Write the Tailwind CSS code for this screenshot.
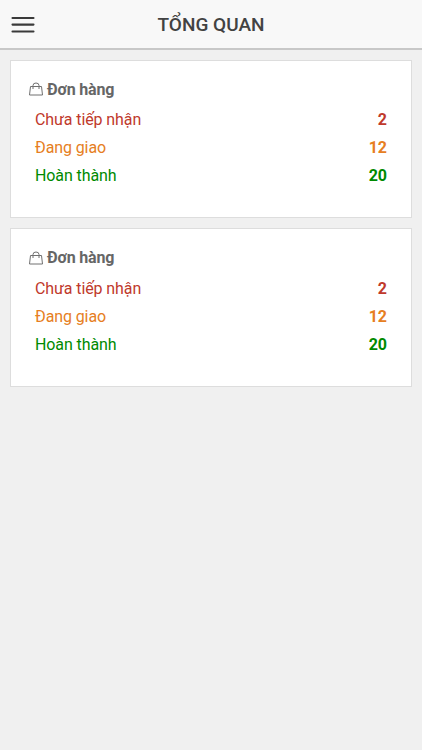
<!DOCTYPE html>
<html lang="vi"><head><meta charset="utf-8"><title>Tổng quan</title>
<script src="https://cdn.jsdelivr.net/npm/@tailwindcss/browser@4"></script></head>
<body class="bg-[#f0f0f0] font-['Roboto',sans-serif] h-[750px] overflow-hidden">
<header class="relative h-[50px] bg-[#f8f8f8] border-b-2 border-[#c8c8c8] flex items-center justify-center">
<svg class="absolute left-[11px] top-[16px]" width="24" height="18" viewBox="0 0 24 18" stroke="#3a3a3a" stroke-width="2.1" stroke-linecap="round" fill="none"><path d="M1.500 2h21M1.500 8.600h21M1.500 15.500h21"/></svg>
<h1 class="pt-[2px] text-[19px] leading-[24px] font-medium text-[#424242]">TỔNG QUAN</h1>
</header>
<main class="px-[10px] pt-[10px] flex flex-col gap-[10px]">
<section class="h-[158px] bg-white border border-[#ddd] pt-[14px] pl-[18px] pr-[24px]">
<h2 class="flex items-center gap-[4px] h-[30px] mb-px text-[16px] font-bold tracking-[-0.15px] text-[#666]"><svg class="mb-[2px]" width="14" height="14" viewBox="0 0 14 14" fill="none" stroke="#707070"><path d="M1.500 4.500h11l1 8.500H.5zM4 7V3.500q0-2.500 3-2.500t3 2.500V7"/></svg>Đơn hàng</h2>
<div class="pl-[6px] text-[16px] leading-[28px]">
<div class="flex justify-between text-[#c0392b]"><span class="tracking-[-0.1px]">Chưa tiếp nhận</span><b>2</b></div>
<div class="flex justify-between text-[#e67e22]"><span class="tracking-[-0.1px]">Đang giao</span><b>12</b></div>
<div class="flex justify-between text-[#008a00]"><span class="tracking-[-0.1px]">Hoàn thành</span><b>20</b></div>
</div></section>
<section class="h-[159px] bg-white border border-[#ddd] pt-[14px] pl-[18px] pr-[24px]">
<h2 class="flex items-center gap-[4px] h-[30px] mb-[2px] text-[16px] font-bold tracking-[-0.15px] text-[#666]"><svg class="mb-[1px]" width="14" height="14" viewBox="0 0 14 14" fill="none" stroke="#707070"><path d="M1.500 4.500h11l1 8.500H.5zM4 7V3.500q0-2.500 3-2.500t3 2.500V7"/></svg>Đơn hàng</h2>
<div class="pl-[6px] text-[16px] leading-[28px]">
<div class="flex justify-between text-[#c0392b]"><span class="tracking-[-0.1px]">Chưa tiếp nhận</span><b>2</b></div>
<div class="flex justify-between text-[#e67e22]"><span class="tracking-[-0.1px]">Đang giao</span><b>12</b></div>
<div class="flex justify-between text-[#008a00]"><span class="tracking-[-0.1px]">Hoàn thành</span><b>20</b></div>
</div></section>
</main></body></html>
